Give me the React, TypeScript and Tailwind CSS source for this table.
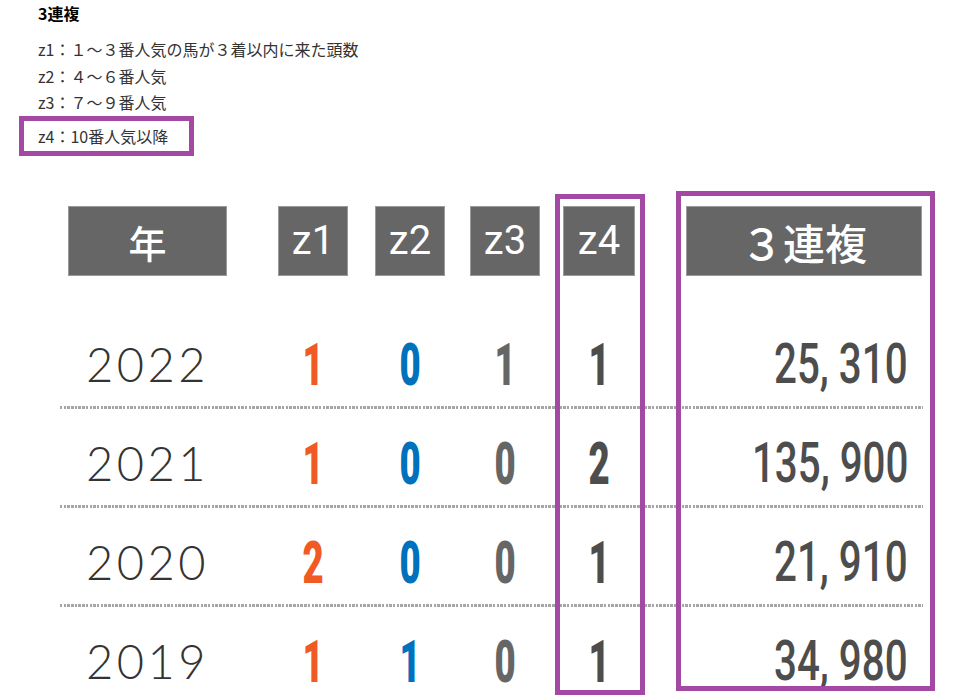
const ROWS = [
  { year: '2022', z: [1, 0, 1, 1], pay: '25, 310' },
  { year: '2021', z: [1, 0, 0, 2], pay: '135, 900' },
  { year: '2020', z: [2, 0, 0, 1], pay: '21, 910' },
  { year: '2019', z: [1, 1, 0, 1], pay: '34, 980' },
]

const Z_COLORS = ['text-[#f15a24]', 'text-[#0071bc]', 'text-[#666666]', 'text-[#4d4d4d]']
// margin-left / width for z1..z4 cells (same for header and body)
const Z_CELLS = ['ml-[51px] w-[70px]', 'ml-[27px] w-[70px]', 'ml-[25px] w-[70px]', 'ml-[23px] w-[72px]']

const jp = "font-['Noto_Sans_CJK_JP','Noto_Sans',sans-serif]"

function HeadBox({ children, className }: { children: React.ReactNode; className: string }) {
  return (
    <div className={`h-[70px] flex items-center justify-center bg-[#666666] border border-[#9a9a9a] text-white ${className}`}>
      {children}
    </div>
  )
}

export default function App() {
  return (
    <div className={`relative w-[969px] h-[696px] overflow-hidden bg-white ${jp}`}>
      {/* legend */}
      <div className="pt-[1px] text-[16px] text-[#333]">
        <div className="pl-[38px] h-[24px] leading-[24px] font-bold text-black">3連複</div>
        <div className="mt-[11px] pl-[38px] leading-[26.5px]">
          <div>z1：１～３番人気の馬が３着以内に来た頭数</div>
          <div>z2：４～６番人気</div>
          <div>z3：７～９番人気</div>
        </div>
        <div className="ml-[19px] w-[175px] h-[40px] border-[5px] border-[#a349a4] pl-[14px] flex items-center">
          z4：10番人気以降
        </div>
      </div>

      {/* table */}
      <div className="absolute left-[60px] top-[206px] w-[863px]">
        <div className="flex">
          <HeadBox className="ml-[8px] w-[159px] text-[38px] font-medium">年</HeadBox>
          {['z1', 'z2', 'z3', 'z4'].map((z, i) => (
            <HeadBox key={z} className={`${Z_CELLS[i]} text-[40px] font-['Roboto',sans-serif]`}>{z}</HeadBox>
          ))}
          <HeadBox className="ml-[51px] w-[236px] text-[42px] font-medium">３連複</HeadBox>
        </div>

        <div className="mt-[34px]">
          {ROWS.map(r => (
            <div key={r.year}>
              <div className="h-[96px] flex items-center pt-[12px]">
                <div className="ml-[8px] w-[159px] text-center font-['Lato',sans-serif] font-light text-[47px] tracking-[3.5px] text-[#333]">
                  {r.year}
                </div>
                {r.z.map((n, i) => (
                  <div key={i} className={`${Z_CELLS[i]} flex justify-center`}>
                    <span className={`inline-block scale-x-[0.62] font-['Roboto',sans-serif] font-black text-[59px] leading-none ${Z_COLORS[i]}`}>
                      {n}
                    </span>
                  </div>
                ))}
                <div className="ml-[51px] w-[236px] flex justify-end pr-[14px]">
                  <span className="inline-block origin-right scale-x-[0.72] font-['Roboto',sans-serif] font-medium text-[56px] leading-none text-[#4d4d4d] whitespace-nowrap">
                    {r.pay}
                  </span>
                </div>
              </div>
              <div className="h-[3px] bg-[repeating-linear-gradient(90deg,#a6a6a6_0_2.5px,transparent_2.5px_3.7px)]" />
            </div>
          ))}
        </div>
      </div>

      {/* highlight frames */}
      <div className="absolute left-[555px] top-[194px] w-[90px] h-[501px] border-[5px] border-[#a349a4]" />
      <div className="absolute left-[676px] top-[191px] w-[259px] h-[500px] border-[5px] border-[#a349a4]" />
    </div>
  )
}
